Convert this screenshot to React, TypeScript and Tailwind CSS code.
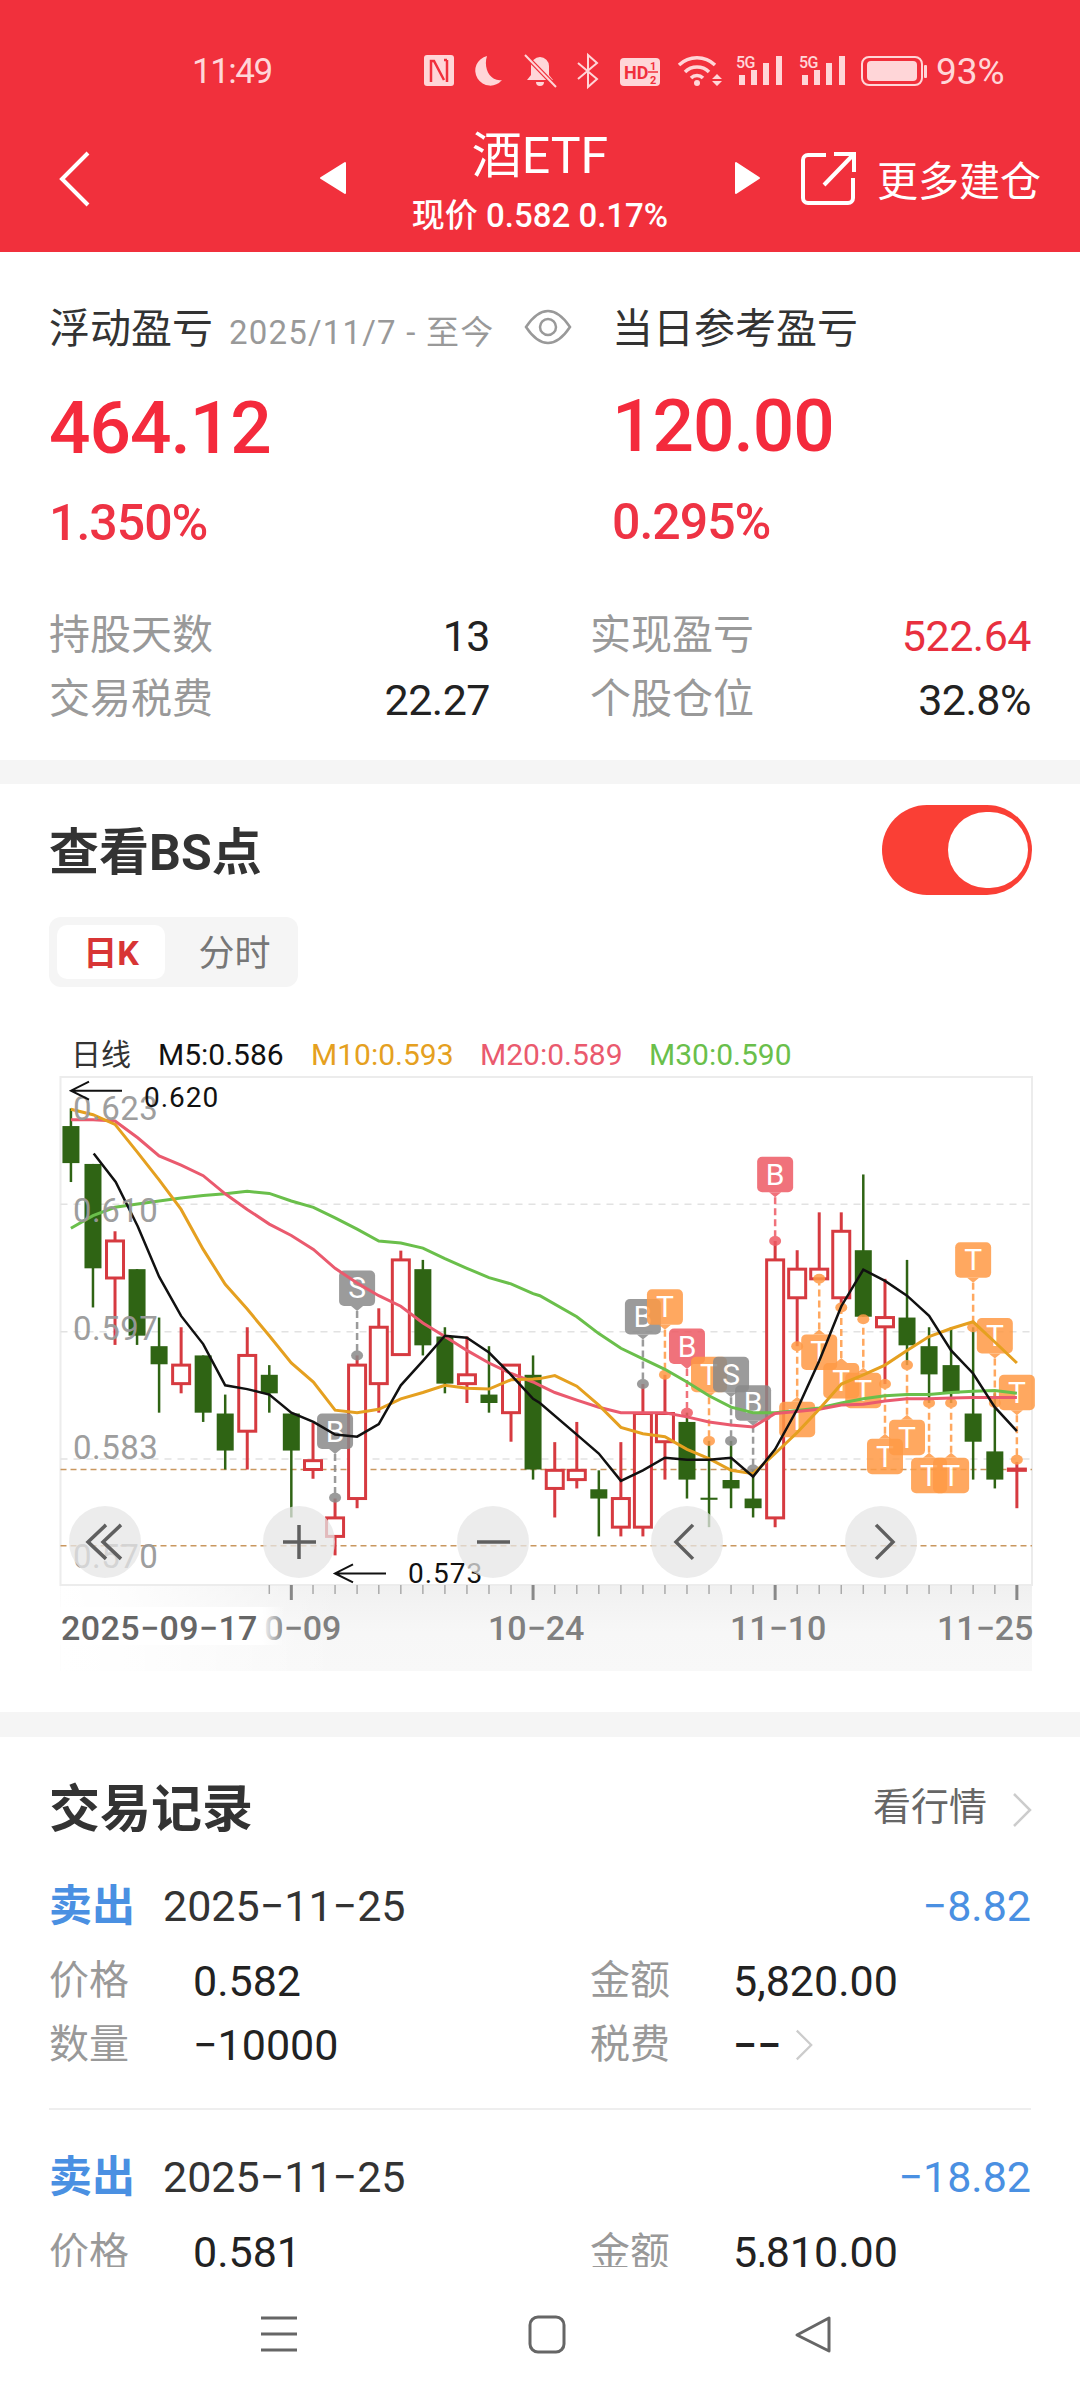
const ZX = 2.904;
const ZY = 2.376;
const X = (px: number) => px / ZX;
const Y = (py: number) => 1020 + py / ZY;
const SHIFT = 1568; // right half of the chart was measured from x=540

type Candle = [number, number, number, number, number, "r" | "g"];

const candles: Candle[] = [
  [206, 210, 385, 252, 340, "g"],
  [270, 342, 683, 342, 590, "g"],
  [334, 502, 772, 525, 613, "r"],
  [398, 592, 772, 592, 750, "g"],
  [462, 707, 933, 775, 818, "g"],
  [526, 730, 887, 820, 864, "r"],
  [590, 797, 955, 797, 933, "g"],
  [654, 890, 1068, 935, 1023, "g"],
  [718, 730, 1068, 797, 977, "r"],
  [782, 820, 933, 843, 887, "g"],
  [846, 935, 1182, 935, 1023, "g"],
  [909, 957, 1090, 1047, 1068, "r"],
  [973, 1137, 1272, 1183, 1227, "r"],
  [1037, 797, 1160, 820, 1137, "r"],
  [1100, 685, 933, 730, 864, "r"],
  [1164, 548, 797, 570, 795, "r"],
  [1228, 570, 797, 592, 773, "g"],
  [1292, 730, 887, 752, 864, "g"],
  [1356, 752, 910, 843, 864, "r"],
  [1420, 775, 933, 890, 910, "g"],
  [1484, 820, 1002, 820, 933, "r"],
  [1548, 797, 1092, 843, 1068, "g"],
  [SHIFT + 43, 1003, 1182, 1070, 1113, "r"],
  [SHIFT + 107, 955, 1113, 1070, 1092, "r"],
  [SHIFT + 171, 1070, 1227, 1115, 1137, "g"],
  [SHIFT + 235, 1003, 1227, 1137, 1205, "r"],
  [SHIFT + 299, 865, 1227, 935, 1205, "r"],
  [SHIFT + 363, 843, 1092, 935, 1002, "r"],
  [SHIFT + 427, 933, 1137, 955, 1092, "g"],
  [SHIFT + 491, 1000, 1205, 1135, 1140, "g"],
  [SHIFT + 555, 1000, 1160, 1093, 1113, "g"],
  [SHIFT + 619, 1070, 1182, 1137, 1160, "g"],
  [SHIFT + 683, 525, 1205, 570, 1183, "r"],
  [SHIFT + 747, 547, 775, 592, 660, "r"],
  [SHIFT + 811, 457, 615, 592, 615, "r"],
  [SHIFT + 875, 457, 683, 502, 660, "r"],
  [SHIFT + 939, 367, 705, 547, 705, "g"],
  [SHIFT + 1002, 615, 865, 707, 729, "r"],
  [SHIFT + 1066, 570, 820, 707, 773, "g"],
  [SHIFT + 1130, 730, 910, 775, 842, "g"],
  [SHIFT + 1194, 730, 910, 820, 887, "g"],
  [SHIFT + 1258, 730, 1092, 935, 1002, "g"],
  [SHIFT + 1321, 887, 1113, 1025, 1092, "g"],
  [SHIFT + 1385, 1050, 1160, 1067, 1070, "r"],
];

const m5 = "272,317 336,385 400,490 462,610 526,703 590,770 654,868 718,877 782,890 846,933 910,955 973,985 1037,990 1100,960 1164,868 1228,810 1292,750 1356,755 1420,790 1484,843 1548,900 |0,910 107,985 171,1030 235,1095 299,1070 363,1040 427,1045 491,1045 555,1040 619,1085 683,1020 747,925 811,810 875,680 939,593 1002,620 1066,655 1130,703 1194,785 1258,840 1321,920 1385,977";
const m10 = "206,212 270,225 334,248 400,315 462,380 526,450 590,545 654,628 718,687 782,750 846,815 910,860 973,927 1037,933 1100,925 1164,900 1228,885 1292,868 1356,875 1420,877 1484,855 1548,853 |0,852 43,845 107,870 171,915 235,968 299,983 363,990 427,1020 491,1042 555,1070 619,1078 683,1030 747,980 811,925 875,865 939,843 1002,820 1066,785 1130,752 1194,733 1258,717 1321,765 1385,815";
const m20 = "206,237 270,237 334,240 400,280 462,323 526,345 590,370 654,413 718,450 782,485 846,512 910,545 973,590 1037,625 1100,655 1164,680 1228,720 1292,752 1356,785 1420,815 1484,840 1548,860 |0,868 43,885 107,903 171,920 235,933 299,933 363,933 427,943 491,955 555,962 619,967 683,935 747,930 811,925 875,915 939,913 1002,905 1066,900 1130,900 1194,898 1258,897 1321,897 1385,897";
const m30 = "206,495 270,465 334,445 400,437 462,430 526,423 590,417 654,413 718,407 782,412 846,430 910,445 973,470 1037,497 1100,525 1164,530 1228,542 1292,567 1356,590 1420,612 1484,627 1548,650 |0,655 107,705 171,745 235,780 299,805 363,830 427,860 491,893 555,920 619,933 683,933 747,928 811,922 875,910 939,900 1002,893 1066,890 1130,890 1194,885 1258,882 1321,880 1385,887";

const toPoints = (s: string) => {
  const [left, right] = s.split("|");
  const conv = (part: string, off: number) =>
    part
      .trim()
      .split(" ")
      .map((p) => {
        const [a, b] = p.split(",").map(Number);
        return `${X(a + off).toFixed(1)},${Y(b).toFixed(1)}`;
      })
      .join(" ");
  return `${conv(left, 0)} ${conv(right, SHIFT)}`;
};

type Tag = { x: number; top: number; dot: number; label: string; color: string };
const GRAY = "#8a8a8a";
const PINK = "#ee5a64";
const ORANGE = "#ff9a45";

const tags: Tag[] = [
  { x: 1037, top: 595, dot: 797, label: "S", color: GRAY },
  { x: 973, top: 935, dot: 1135, label: "B", color: GRAY },
  { x: SHIFT + 299, top: 663, dot: 865, label: "B", color: GRAY },
  { x: SHIFT + 363, top: 640, dot: 843, label: "T", color: ORANGE },
  { x: SHIFT + 427, top: 733, dot: 933, label: "B", color: PINK },
  { x: SHIFT + 491, top: 800, dot: 1000, label: "T", color: ORANGE },
  { x: SHIFT + 555, top: 800, dot: 1000, label: "S", color: GRAY },
  { x: SHIFT + 619, top: 868, dot: 1068, label: "B", color: GRAY },
  { x: SHIFT + 683, top: 325, dot: 525, label: "B", color: PINK },
  { x: SHIFT + 747, top: 907, dot: 775, label: "T", color: ORANGE },
  { x: SHIFT + 811, top: 747, dot: 615, label: "T", color: ORANGE },
  { x: SHIFT + 875, top: 815, dot: 683, label: "T", color: ORANGE },
  { x: SHIFT + 939, top: 838, dot: 711, label: "T", color: ORANGE },
  { x: SHIFT + 1002, top: 995, dot: 865, label: "T", color: ORANGE },
  { x: SHIFT + 1066, top: 950, dot: 820, label: "T", color: ORANGE },
  { x: SHIFT + 1130, top: 1040, dot: 910, label: "T", color: ORANGE },
  { x: SHIFT + 1194, top: 1040, dot: 910, label: "T", color: ORANGE },
  { x: SHIFT + 1258, top: 528, dot: 730, label: "T", color: ORANGE },
  { x: SHIFT + 1321, top: 708, dot: 910, label: "T", color: ORANGE },
  { x: SHIFT + 1385, top: 843, dot: 1045, label: "T", color: ORANGE },
];

function ChartTag({ tag }: { tag: Tag }) {
  const cx = X(tag.x);
  const top = Y(tag.top);
  const h = 35.5;
  const dotY = Y(tag.dot);
  const above = dotY > top;
  const tipY = above ? top + h + 5 : top - 5;
  const baseY = above ? top + h : top;
  return (
    <g opacity={0.85}>
      <line x1={cx} x2={cx} y1={tipY} y2={dotY} stroke={tag.color} strokeWidth={2.5} strokeDasharray="7 4" />
      <ellipse cx={cx} cy={dotY} rx={6} ry={5} fill={tag.color} />
      <rect x={cx - 18} y={top} width={36} height={h} rx={5} fill={tag.color} />
      <polygon points={`${cx - 6},${baseY} ${cx + 6},${baseY} ${cx},${tipY}`} fill={tag.color} />
      <text x={cx} y={top + 28} textAnchor="middle" fontSize={30} fill="#fff">
        {tag.label}
      </text>
    </g>
  );
}

function KChart() {
  const left = 60.5;
  const right = 1032;
  const top = 1077;
  const bottom = 1585;
  const grid = [438, 741, 1043];
  const labels: [string, number][] = [
    ["0.623", 237],
    ["0.610", 480],
    ["0.597", 760],
    ["0.583", 1043],
    ["0.570", 1302],
  ];
  const ticks = candles.filter((c) => c[0] >= 782);
  const majors = [846, 1548, SHIFT + 683, SHIFT + 1385];
  return (
    <svg width={1080} height={600} viewBox="0 1075 1080 600" className="block">
      <defs>
        <linearGradient id="fade" x1="0" y1="0" x2="0" y2="1">
          <stop offset="0" stopColor="#f0f0f0" />
          <stop offset="0.55" stopColor="#f7f7f7" />
          <stop offset="1" stopColor="#f8f8f8" />
        </linearGradient>
        <linearGradient id="fadeBg" x1="0" y1="0" x2="1" y2="0">
          <stop offset="0" stopColor="#ffffff" />
          <stop offset="0.2" stopColor="#ffffff" stopOpacity="0.9" />
          <stop offset="1" stopColor="#ffffff" stopOpacity="0" />
        </linearGradient>
        <linearGradient id="fadeLeft" x1="0" y1="0" x2="1" y2="0">
          <stop offset="0" stopColor="#ffffff" />
          <stop offset="1" stopColor="#ffffff" stopOpacity="0" />
        </linearGradient>
      </defs>
      <rect x={left} y={bottom} width={right - left} height={86} fill="url(#fade)" />
      <rect x={left} y={bottom} width={280} height={86} fill="url(#fadeBg)" />
      <rect x={left} y={top} width={right - left} height={bottom - top} fill="#fff" stroke="#ececec" strokeWidth={2} />

      {grid.map((g) => (
        <line key={g} x1={left} x2={right} y1={Y(g)} y2={Y(g)} stroke="#e2e2e2" strokeWidth={1.5} strokeDasharray="7 6" />
      ))}
      {[1068, 1249].map((g) => (
        <line key={g} x1={left} x2={right} y1={Y(g)} y2={Y(g)} stroke="#c9975f" strokeWidth={1.5} strokeDasharray="6 4" />
      ))}

      {candles.map(([cx, wt, wb, bt, bb, kind]) => {
        const color = kind === "r" ? "#d63a40" : "#2f6414";
        const x = X(cx);
        return (
          <g key={cx}>
            <line x1={x} x2={x} y1={Y(wt)} y2={Y(wb)} stroke={color} strokeWidth={kind === "r" ? 3 : 2.5} />
            {kind === "r" ? (
              <rect x={x - 8.5} y={Y(bt)} width={17} height={Y(bb) - Y(bt)} fill="#fff" stroke={color} strokeWidth={3} />
            ) : (
              <rect x={x - 8.5} y={Y(bt)} width={17} height={Y(bb) - Y(bt)} fill={color} />
            )}
          </g>
        );
      })}

      {tags.map((t) => (
        <ChartTag key={`${t.x}-${t.top}`} tag={t} />
      ))}

      <polyline points={toPoints(m30)} fill="none" stroke="#6abf4b" strokeWidth={3} />
      <polyline points={toPoints(m20)} fill="none" stroke="#ea5a6e" strokeWidth={3} />
      <polyline points={toPoints(m10)} fill="none" stroke="#e5a020" strokeWidth={3} />
      <polyline points={toPoints(m5)} fill="none" stroke="#111" strokeWidth={2.5} />

      {labels.map(([t, py]) => (
        <text key={t} x={73} y={Y(py)} fontSize={33} fill="#999" letterSpacing={0.5} opacity={0.95}>
          {t}
        </text>
      ))}

      <path d={`M122 ${Y(168)}H71M89 ${Y(168) - 9}L71 ${Y(168)}L89 ${Y(168) + 9}`} fill="none" stroke="#111" strokeWidth={2} />
      <text x={144} y={Y(207)} fontSize={28} fill="#111" letterSpacing={1}>0.620</text>
      <path d={`M386 ${Y(1315)}H335M353 ${Y(1315) - 9}L335 ${Y(1315)}L353 ${Y(1315) + 9}`} fill="none" stroke="#111" strokeWidth={2} />
      <text x={408} y={Y(1338)} fontSize={28} fill="#111" letterSpacing={1}>0.573</text>

      {ticks.map((c) => {
        const major = majors.includes(c[0]);
        return (
          <line
            key={c[0]}
            x1={X(c[0])}
            x2={X(c[0])}
            y1={bottom}
            y2={bottom + (major ? 15 : 9)}
            stroke={major ? "#888" : "#aaa"}
            strokeWidth={major ? 3 : 1.5}
          />
        );
      })}

      <text x={245} y={1640} fontSize={34} fontWeight={500} fill="#808080">10−09</text>
      <rect x={left} y={bottom + 22} width={202} height={38} fill="#fff" />
      <rect x={262} y={bottom + 22} width={22} height={38} fill="url(#fadeLeft)" />
      <text x={61} y={1640} fontSize={34} fontWeight={500} fill="#666" letterSpacing={0.4}>2025−09−17</text>
      <text x={488} y={1640} fontSize={34} fontWeight={500} fill="#808080">10−24</text>
      <text x={730} y={1640} fontSize={34} fontWeight={500} fill="#808080">11−10</text>
      <text x={937} y={1640} fontSize={34} fontWeight={500} fill="#808080">11−25</text>

      {[105, 299, 493, 687, 881].map((cx) => (
        <circle key={cx} cx={cx} cy={Y(1240)} r={36} fill="#e6e6e6" opacity={0.75} />
      ))}
      <g fill="none" stroke="#5f5f5f" strokeWidth={3.5}>
        <path d={`M106 ${Y(1240) - 17}L88 ${Y(1240)}L106 ${Y(1240) + 17}M121 ${Y(1240) - 17}L103 ${Y(1240)}L121 ${Y(1240) + 17}`} />
        <path d={`M283 ${Y(1240)}H316M299 ${Y(1240) - 17}V${Y(1240) + 17}`} />
        <path d={`M477 ${Y(1240)}H510`} />
        <path d={`M693 ${Y(1240) - 17}L676 ${Y(1240)}L693 ${Y(1240) + 17}`} />
        <path d={`M876 ${Y(1240) - 17}L893 ${Y(1240)}L876 ${Y(1240) + 17}`} />
      </g>
    </svg>
  );
}

function StatusIcons() {
  const c = "#ffd6d8";
  const bg = "#f1303c";
  return (
    <svg width={520} height={40} viewBox="420 52 520 40" className="absolute left-[420px] top-[52px]">
      <rect x={424} y={55} width={30} height={31} rx={3} fill={c} />
      <path d="M431 82V61H434L444 80M447 60V82" fill="none" stroke={bg} strokeWidth={2.5} />
      <path d="M444 60L447 60" stroke={bg} strokeWidth={2.5} />
      <path d="M487 56a15 15 0 1 0 15 24c-12 2-19-12-15-24z" fill={c} />
      <path d="M540 57a9 9 0 0 1 9 9v9l4 5h-26l4-5v-9a9 9 0 0 1 9-9zM536 82h8a4 4 0 0 1-8 0z" fill={c} />
      <path d="M525 55L556 87" stroke={bg} strokeWidth={4.5} />
      <path d="M525 55L556 87" stroke={c} strokeWidth={2} />
      <path d="M578 63L597 79L588 87V55L597 63L578 79" fill="none" stroke={c} strokeWidth={2} />
      <rect x={620} y={58} width={40} height={28} rx={4} fill={c} />
      <text x={624} y={79} fontSize={18} fontWeight={700} fill={bg}>HD</text>
      <text x={650} y={70} fontSize={11} fontWeight={700} fill={bg}>1</text>
      <path d="M648 72H658" stroke={bg} strokeWidth={1.5} />
      <text x={650} y={84} fontSize={11} fontWeight={700} fill={bg}>2</text>
      <g fill="none" stroke={c} strokeWidth={3.5}>
        <path d="M679 65a26 26 0 0 1 36 0" />
        <path d="M685 72a17 17 0 0 1 24 0" />
        <path d="M691 78a8.5 8.5 0 0 1 12 0" />
      </g>
      <circle cx={697} cy={83} r={3} fill={c} />
      <path d="M712 79l5-5 5 5zM712 81h10l-5 5z" fill={c} />
      {[736, 799].map((base) => (
        <g key={base} fill={c}>
          <text x={base} y={68} fontSize={16} fontWeight={500} letterSpacing={-0.5}>5G</text>
          <rect x={base + 3} y={75} width={6} height={10} />
          <rect x={base + 15} y={70} width={6} height={15} />
          <rect x={base + 27} y={63} width={6} height={22} />
          <rect x={base + 40} y={56} width={6} height={29} />
        </g>
      ))}
      <rect x={862} y={57} width={60} height={28} rx={7} fill="none" stroke={c} strokeWidth={2} />
      <rect x={867} y={61} width={50} height={20} rx={4} fill={c} />
      <rect x={924} y={65} width={3} height={13} rx={1} fill={c} />
    </svg>
  );
}

function Header() {
  return (
    <header className="relative h-[252px] shrink-0 bg-[#f1303c] text-white">
      <span className="absolute left-[192px] top-[50px] text-[35px] leading-[44px] tracking-[-1.5px] text-[#ffd6d8]">11:49</span>
      <StatusIcons />
      <span className="absolute left-[936px] top-[50px] text-[37px] leading-[44px] text-[#ffd6d8]">93%</span>
      <div className="absolute inset-x-0 top-[128px] flex flex-col items-center">
        <span className="text-[50px] leading-[56px]">酒ETF</span>
        <span className="mt-[13px] text-[33px] font-medium leading-[38px]">现价 0.582 0.17%</span>
      </div>
      <svg width={1080} height={100} viewBox="0 130 1080 100" className="absolute left-0 top-[130px]">
        <path d="M88 153L62 179L88 205" fill="none" stroke="#fff" strokeWidth={4} />
        <path d="M345 163V193L321 178Z" fill="#fff" strokeLinejoin="round" stroke="#fff" strokeWidth={2} />
        <path d="M736 163V193L759 178Z" fill="#fff" strokeLinejoin="round" stroke="#fff" strokeWidth={2} />
        <path d="M826 155H808a5 5 0 0 0-5 5V198a5 5 0 0 0 5 5H848a5 5 0 0 0 5-5V178" fill="none" stroke="#fff" strokeWidth={4} />
        <path d="M824 185L853 155M834 154H854V172" fill="none" stroke="#fff" strokeWidth={4} />
      </svg>
      <span className="absolute left-[877px] top-[158px] text-[41px] leading-[48px]">更多建仓</span>
    </header>
  );
}

function Stat({ label, value, red }: { label: string; value: string; red?: boolean }) {
  return (
    <div className="flex h-[64px] items-center justify-between">
      <span className="text-[41px] text-[#999]">{label}</span>
      <span className={`text-[43px] tracking-[-0.5px] ${red ? "text-[#e8303f]" : "text-[#222]"}`}>{value}</span>
    </div>
  );
}

function Summary() {
  return (
    <section className="h-[508px] shrink-0 bg-white px-[49px]">
      <div className="grid h-[300px] grid-cols-[563px_1fr]">
        <div>
          <div className="mt-[50px] flex h-[56px] items-center">
            <span className="text-[41px] text-[#333]">浮动盈亏</span>
            <span className="ml-[16px] mt-[6px] whitespace-nowrap text-[33px] tracking-[1.2px] text-[#999]">2025/11/7 - 至今</span>
            <svg width={48} height={36} viewBox="0 0 48 36" className="ml-[30px] -mt-[6px] shrink-0">
              <path d="M2 18C10 6 17 2 24 2s14 4 22 16C38 30 31 34 24 34S10 30 2 18z" fill="none" stroke="#999" strokeWidth={2.5} />
              <circle cx={24} cy={18} r={8} fill="none" stroke="#999" strokeWidth={2.5} />
            </svg>
          </div>
          <div className="mt-[35px] text-[73px] font-medium leading-[70px] tracking-[-1px] text-[#f42a3c]">464.12</div>
          <div className="mt-[32px] text-[50px] font-medium leading-[56px] tracking-[-1px] text-[#ee3344]">1.350%</div>
        </div>
        <div>
          <div className="mt-[50px] flex h-[56px] items-center text-[41px] text-[#333]">当日参考盈亏</div>
          <div className="mt-[33px] text-[73px] font-medium leading-[70px] tracking-[-1px] text-[#f42a3c]">120.00</div>
          <div className="mt-[33px] text-[50px] font-medium leading-[56px] tracking-[-1px] text-[#ee3344]">0.295%</div>
        </div>
      </div>
      <div className="mt-[52px] grid grid-cols-[441px_441px] gap-x-[100px]">
        <Stat label="持股天数" value="13" />
        <Stat label="实现盈亏" value="522.64" red />
        <Stat label="交易税费" value="22.27" />
        <Stat label="个股仓位" value="32.8%" />
      </div>
    </section>
  );
}

function BsChart() {
  return (
    <section className="h-[928px] shrink-0 bg-white">
      <div className="mt-[21px] flex h-[90px] items-center justify-between pl-[49px] pr-[48px]">
        <span className="mt-[6px] text-[50px] font-bold text-[#333]">查看BS点</span>
        <div className="flex h-[90px] w-[150px] items-center justify-end rounded-full bg-[#fa3f35] pr-[4px]">
          <div className="h-[76px] w-[80px] rounded-full bg-white" />
        </div>
      </div>
      <div className="ml-[49px] mt-[22px] flex h-[70px] w-[249px] items-center rounded-[12px] bg-[#f5f5f5] px-[8px]">
        <div className="flex h-[54px] w-[108px] items-center justify-center rounded-[10px] bg-white pt-[2px] text-[34px] font-bold text-[#d83535]">日K</div>
        <div className="flex-1 pl-[14px] pt-[4px] text-center text-[36px] text-[#777]">分时</div>
      </div>
      <div className="flex h-[88px] items-end pl-[71px] text-[30px] leading-[40px]">
        <span className="w-[87px] text-[#333]">日线</span>
        <span className="w-[153px] text-[#111]">M5:0.586</span>
        <span className="w-[169px] text-[#e5a020]">M10:0.593</span>
        <span className="w-[169px] text-[#ea5a6e]">M20:0.589</span>
        <span className="text-[#6abf4b]">M30:0.590</span>
      </div>
      <KChart />
    </section>
  );
}

function Chevron({ className }: { className: string }) {
  return (
    <svg viewBox="0 0 20 36" className={className}>
      <path d="M2 2L18 18L2 34" fill="none" stroke="#ccc" strokeWidth={2.5} />
    </svg>
  );
}

function Trade({ amount, price, value, qty, tax }: { amount: string; price: string; value: string; qty: string; tax?: boolean }) {
  return (
    <div className="px-[49px]">
      <div className="flex h-[56px] items-center justify-between">
        <div className="flex items-center">
          <span className="w-[114px] text-[43px] font-bold text-[#4a90e2]">卖出</span>
          <span className="text-[43px] text-[#333]">2025−11−25</span>
        </div>
        <span className="text-[43px] text-[#4a90e2]">{amount}</span>
      </div>
      <div className="mt-[15px] grid grid-cols-[541px_1fr] text-[#222]">
        <div className="flex h-[64px] items-center">
          <span className="w-[144px] text-[40px] text-[#999]">价格</span>
          <span className="text-[43px]">{price}</span>
        </div>
        <div className="flex h-[64px] items-center">
          <span className="w-[143px] text-[40px] text-[#999]">金额</span>
          <span className="text-[43px]">{value}</span>
        </div>
        {tax ? (
          <>
            <div className="flex h-[64px] items-center">
              <span className="w-[144px] text-[40px] text-[#999]">数量</span>
              <span className="text-[43px]">{qty}</span>
            </div>
            <div className="flex h-[64px] items-center">
              <span className="w-[143px] text-[40px] text-[#999]">税费</span>
              <span className="w-[62px] text-[43px] font-medium">−−</span>
              <Chevron className="h-[34px] w-[18px]" />
            </div>
          </>
        ) : null}
      </div>
    </div>
  );
}

function Records() {
  return (
    <section className="flex-1 overflow-hidden bg-white">
      <div className="mt-[42px] flex h-[62px] items-center justify-between pl-[49px] pr-[48px]">
        <span className="text-[51px] font-bold text-[#333]">交易记录</span>
        <div className="flex items-center">
          <span className="-mt-[5px] text-[38px] text-[#666]">看行情</span>
          <Chevron className="ml-[25px] h-[36px] w-[20px]" />
        </div>
      </div>
      <div className="mt-[37px]">
        <Trade amount="−8.82" price="0.582" value="5,820.00" qty="−10000" tax />
      </div>
      <div className="mx-[49px] mt-[31px] h-[1.5px] bg-[#eee]" />
      <div className="mt-[40px]">
        <Trade amount="−18.82" price="0.581" value="5,810.00" qty="−10000" />
      </div>
    </section>
  );
}

function NavBar() {
  return (
    <nav className="h-[133px] shrink-0 bg-white">
      <svg width={1080} height={133} viewBox="0 2267 1080 133" className="block">
        <g fill="none" stroke="#666" strokeWidth={3}>
          <path d="M261 2318H297M261 2334H297M261 2350H297" />
          <rect x={530} y={2317} width={34} height={35} rx={8} />
          <path d="M829 2318V2351L797 2335Z" strokeLinejoin="round" />
        </g>
      </svg>
    </nav>
  );
}

export default function App() {
  return (
    <div className="flex h-[2400px] w-[1080px] flex-col overflow-hidden bg-white font-['Roboto','Noto_Sans_CJK_SC',sans-serif]">
      <Header />
      <Summary />
      <div className="h-[24px] shrink-0 bg-[#f5f5f5]" />
      <BsChart />
      <div className="h-[25px] shrink-0 bg-[#f5f5f5]" />
      <Records />
      <NavBar />
    </div>
  );
}
